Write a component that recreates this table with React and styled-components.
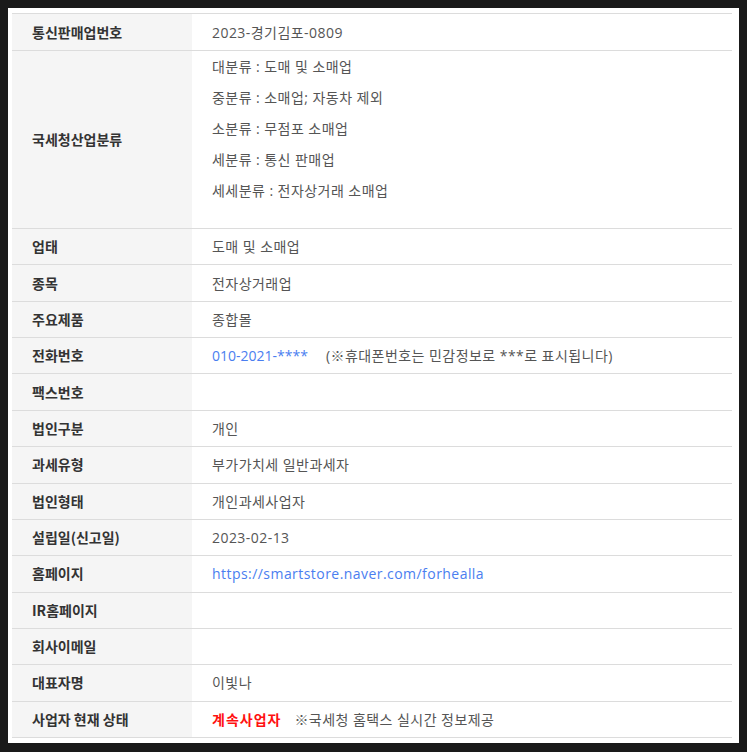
import React from 'react';
import styled, { createGlobalStyle } from 'styled-components';

const GlobalStyle = createGlobalStyle`
  html {
    background: #1a1a1a;
  }
  body {
    margin: 8px;
    background: #ffffff;
    font-family: 'Open Sans', 'Noto Sans CJK KR', sans-serif;
  }
`;

const Wrapper = styled.div`
  padding: 5px 7px 5px 4px;
`;

const InfoTable = styled.div`
  border-top: 1px solid #dcdcdc;
`;

const Row = styled.div`
  display: grid;
  grid-template-columns: 180px 1fr;
  border-bottom: 1px solid #dcdcdc;
  min-height: ${p => (p.$first ? 36 : 35.36)}px;
`;

const Label = styled.div`
  background: #f5f5f5;
  display: flex;
  align-items: center;
  padding: 0 20px 1px;
  font-size: 14px;
  font-weight: 600;
  color: #333;
  font-family: 'Noto Sans CJK KR', sans-serif;
`;

const Value = styled.div`
  display: flex;
  align-items: center;
  padding: 0 20px 1px;
  font-size: 14px;
  letter-spacing: 0.45px;
  color: #555;
  gap: ${p => p.$gap || 0}px;
`;

const CategoryList = styled.ul`
  list-style: none;
  margin: 0;
  padding: 5px 20px 17px;
`;

const CategoryItem = styled.li`
  font-size: 14px;
  line-height: 21px;
  letter-spacing: 0.45px;
  color: #555;
  margin-bottom: 10px;
`;

const Link = styled.a`
  color: #4a7ef0;
  text-decoration: none;
`;

const Phone = styled(Link)`
  letter-spacing: 0;
`;

const Status = styled.span`
  color: #ff1010;
  font-weight: 700;
  letter-spacing: 1px;
  font-family: 'Noto Sans CJK KR', sans-serif;
`;

const categories = [
  '대분류 : 도매 및 소매업',
  '중분류 : 소매업; 자동차 제외',
  '소분류 : 무점포 소매업',
  '세분류 : 통신 판매업',
  '세세분류 : 전자상거래 소매업',
];

const rows = [
  ['업태', '도매 및 소매업'],
  ['종목', '전자상거래업'],
  ['주요제품', '종합몰'],
];

const rows2 = [
  ['팩스번호', ''],
  ['법인구분', '개인'],
  ['과세유형', '부가가치세 일반과세자'],
  ['법인형태', '개인과세사업자'],
  ['설립일(신고일)', '2023-02-13'],
];

export default function App() {
  return (
    <Wrapper>
      <GlobalStyle />
      <InfoTable>
        <Row $first>
          <Label>통신판매업번호</Label>
          <Value>2023-경기김포-0809</Value>
        </Row>
        <Row>
          <Label>국세청산업분류</Label>
          <CategoryList>
            {categories.map(c => (
              <CategoryItem key={c}>{c}</CategoryItem>
            ))}
          </CategoryList>
        </Row>
        {rows.map(([l, v]) => (
          <Row key={l}>
            <Label>{l}</Label>
            <Value>{v}</Value>
          </Row>
        ))}
        <Row>
          <Label>전화번호</Label>
          <Value $gap={18}>
            <Phone href="#">010-2021-****</Phone>
            <span>(※휴대폰번호는 민감정보로 ***로 표시됩니다)</span>
          </Value>
        </Row>
        {rows2.map(([l, v]) => (
          <Row key={l}>
            <Label>{l}</Label>
            <Value>{v}</Value>
          </Row>
        ))}
        <Row>
          <Label>홈페이지</Label>
          <Value>
            <Link href="#">https://smartstore.naver.com/forhealla</Link>
          </Value>
        </Row>
        <Row>
          <Label>IR홈페이지</Label>
          <Value />
        </Row>
        <Row>
          <Label>회사이메일</Label>
          <Value />
        </Row>
        <Row>
          <Label>대표자명</Label>
          <Value>이빛나</Value>
        </Row>
        <Row>
          <Label>사업자 현재 상태</Label>
          <Value $gap={13}>
            <Status>계속사업자</Status>
            <span>※국세청 홈택스 실시간 정보제공</span>
          </Value>
        </Row>
      </InfoTable>
    </Wrapper>
  );
}
